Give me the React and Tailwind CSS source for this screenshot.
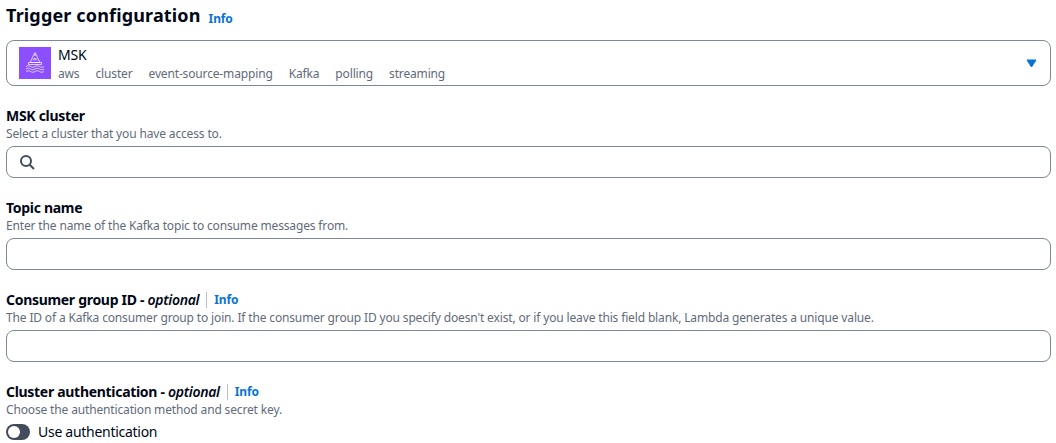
const tags = ['aws', 'cluster', 'event-source-mapping', 'Kafka', 'polling', 'streaming']

function Info() {
  return <a className="text-[12px] font-bold leading-[16px] tracking-[-0.1px] text-[#0972d3]">Info</a>
}

function FieldLabel({ title, optional, info }) {
  return (
    <div className="flex h-[20px] items-center text-[14px] font-bold leading-[20px] tracking-[-0.3px] text-[#000716]">
      <span>
        {title}
        {optional && <span> - <i className="font-semibold">optional</i></span>}
      </span>
      {info && (
        <span className="ml-[7px] flex h-[16px] items-center border-l border-[#b6bec9] pl-[7px]">
          <Info />
        </span>
      )}
    </div>
  )
}

function Hint({ children }) {
  return <p className="text-[12px] leading-[16px] tracking-[-0.15px] text-[#5f6b7a]">{children}</p>
}

function TextBox({ children }) {
  return (
    <div className="mt-[4px] flex h-[32px] w-[1045px] items-center rounded-[8px] border border-[#7d8998] bg-white px-[12px]">
      {children}
    </div>
  )
}

function MskIcon() {
  return (
    <div className="flex h-[32px] w-[32px] items-center justify-center bg-[#8c4fff]">
      <svg width="24" height="24" viewBox="0 0 24 24" fill="none" stroke="white" strokeWidth="0.7">
        <circle cx="12" cy="2.800" r="1" />
        <path d="M10.600 4h2.800l3.400 7.500H7.200z" />
        <path d="M9.500 9l2.500-1.800L14.500 9M12 7.200v2.500" />
        <path d="M5.500 11.500h13v2h-13z" />
        <path d="M3 15.500c1.500-1 3-1 4.500 0s3 1 4.500 0 3-1 4.500 0 3 1 4.500 0" />
        <path d="M3 18c1.500-1 3-1 4.500 0s3 1 4.500 0 3-1 4.500 0 3 1 4.500 0" />
        <path d="M3 20.500c1.500-1 3-1 4.500 0s3 1 4.500 0 3-1 4.500 0 3 1 4.500 0" />
      </svg>
    </div>
  )
}

export default function App() {
  return (
    <div className="h-[443px] w-[1056px] overflow-hidden bg-white pl-[6px] font-['Noto_Sans',sans-serif]">
      <div className="flex h-[30px] items-center">
        <h2 className="text-[18px] font-bold leading-[22px] tracking-[0.15px] text-[#000716]">Trigger configuration</h2>
        <span className="ml-[8px] pt-[3px]"><Info /></span>
      </div>

      <div className="mt-[10px] flex h-[46px] w-[1045px] items-center justify-between rounded-[8px] border border-[#7d8998] bg-white pl-[12px] pr-[13px]">
        <div className="flex items-center gap-[7px]">
          <MskIcon />
          <div>
            <div className="text-[14px] leading-[20px] tracking-[-0.2px] text-[#000716]">MSK</div>
            <div className="flex gap-[16px] pt-[1px] text-[12px] leading-[16px] tracking-[-0.15px] text-[#5f6b7a]">
              {tags.map((tag) => <span key={tag}>{tag}</span>)}
            </div>
          </div>
        </div>
        <svg width="11" height="9" viewBox="0 0 11 9" className="text-[#0972d3]">
          <path d="M1 1h9L5.500 8z" fill="currentColor" stroke="currentColor" strokeWidth="1" strokeLinejoin="round" />
        </svg>
      </div>

      <div className="mt-[20px]">
        <FieldLabel title="MSK cluster" />
        <Hint>Select a cluster that you have access to.</Hint>
        <TextBox>
          <svg width="16" height="16" viewBox="0 0 16 16" fill="none" stroke="#414d5c" strokeWidth="2">
            <circle cx="7" cy="7" r="5" />
            <path d="m10.700 10.700 4.300 4.300" />
          </svg>
        </TextBox>
      </div>

      <div className="mt-[20px]">
        <FieldLabel title="Topic name" />
        <Hint>Enter the name of the Kafka topic to consume messages from.</Hint>
        <TextBox />
      </div>

      <div className="mt-[20px]">
        <FieldLabel title="Consumer group ID" optional info />
        <Hint>The ID of a Kafka consumer group to join. If the consumer group ID you specify doesn't exist, or if you leave this field blank, Lambda generates a unique value.</Hint>
        <TextBox />
      </div>

      <div className="mt-[20px]">
        <FieldLabel title="Cluster authentication" optional info />
        <Hint>Choose the authentication method and secret key.</Hint>
        <div className="mt-[4px] flex h-[20px] items-center gap-[8px]">
          <div className="flex h-[16px] w-[24px] items-center rounded-full bg-[#414d5c] pl-[2px]">
            <div className="h-[12px] w-[12px] rounded-full bg-white" />
          </div>
          <span className="text-[14px] leading-[20px] tracking-[-0.28px] text-[#000716]">Use authentication</span>
        </div>
      </div>
    </div>
  )
}
